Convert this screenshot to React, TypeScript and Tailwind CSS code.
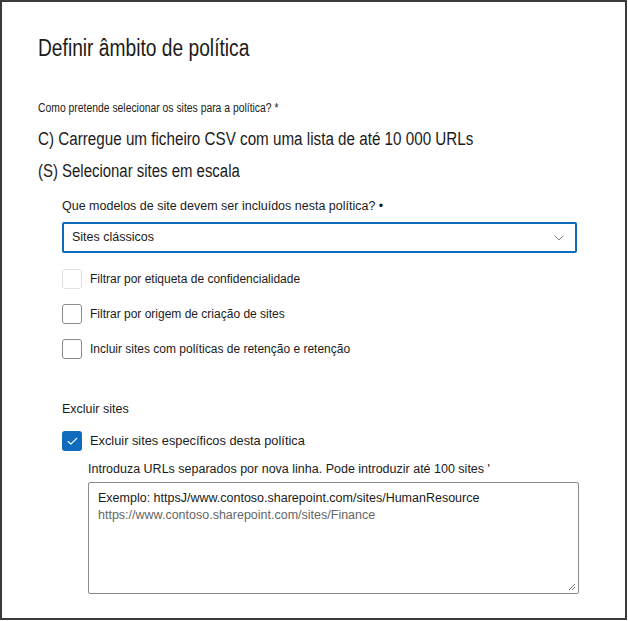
import { ChevronDown, Check } from 'lucide-react';

const filters = [
  { label: 'Filtrar por etiqueta de confidencialidade', faded: true },
  { label: 'Filtrar por origem de criação de sites', faded: false },
  { label: 'Incluir sites com políticas de retenção e retenção', faded: false },
];

export default function App() {
  return (
    <div className="w-[628px] h-[621px] bg-white" style={{ fontFamily: '"Liberation Sans", Arial, sans-serif' }}>
      <div className="w-[627px] h-[620px] border-2 border-[#3b3b3b] pl-[36px] pt-[32px] text-[#1b1b1b]">
        {/* top block uses a condensed face in the original, squeeze it */}
        <h1 className="text-[23px] leading-[28px] whitespace-nowrap origin-left scale-x-[0.835]">Definir âmbito de política</h1>

        <p className="mt-[38px] text-[12.5px] leading-[16px] whitespace-nowrap origin-left scale-x-[0.83]">Como pretende selecionar os sites para a política? *</p>
        <p className="mt-[12px] text-[18px] leading-[22px] whitespace-nowrap origin-left scale-x-[0.845]">C) Carregue um ficheiro CSV com uma lista de até 10 000 URLs</p>
        <p className="mt-[10px] text-[18px] leading-[22px] whitespace-nowrap origin-left scale-x-[0.83]">(S) Selecionar sites em escala</p>

        <div className="pl-[24px]">
          <p className="mt-[16px] text-[12.5px] leading-[16px]">Que modelos de site devem ser incluídos nesta política? •</p>
          <div className="mt-[8px] w-[515px] h-[31px] border-2 border-[#0f6cbd] rounded-[2px] flex items-center justify-between pl-[8px] pr-[8px]">
            <span className="text-[12.5px]">Sites clássicos</span>
            <ChevronDown className="w-[16px] h-[16px] text-[#666]" strokeWidth={1.25} />
          </div>

          <div className="mt-[16px] flex flex-col gap-[15px]">
            {filters.map(f => (
              <div key={f.label} className="flex items-center h-[20px]">
                <div className={`w-[20px] h-[20px] rounded-[3px] border ${f.faded ? 'border-[#e1e1e1]' : 'border-[#8a8a8a]'}`} />
                <span className="ml-[8px] text-[12px]">{f.label}</span>
              </div>
            ))}
          </div>

          <p className="mt-[42px] text-[12.5px] leading-[16px]">Excluir sites</p>
          <div className="mt-[14px] flex items-center h-[20px]">
            <div className="w-[20px] h-[20px] rounded-[3px] bg-[#0f6cbd] flex items-center justify-center">
              <Check className="w-[13px] h-[13px] text-white" strokeWidth={2} />
            </div>
            <span className="ml-[8px] text-[12.8px]">Excluir sites específicos desta política</span>
          </div>

          <div className="pl-[26px]">
            <p className="mt-[10px] text-[12.5px] leading-[16px]">Introduza URLs separados por nova linha. Pode introduzir até 100 sites '</p>
            <div className="relative mt-[5px] w-[491px] h-[112px] border border-[#8a8a8a] rounded-[2px] pl-[9px] pt-[7px] text-[12.5px] leading-[17px]">
              <div className="text-[#1b1b1b]">Exemplo: httpsJ/www.contoso.sharepoint.com/sites/HumanResource</div>
              <div className="text-[#666]">https://www.contoso.sharepoint.com/sites/Finance</div>
              <svg className="absolute right-[2px] bottom-[2px]" width="8" height="8" viewBox="0 0 8 8">
                <path d="M7 1L1 7M7 4L4 7" stroke="#777" strokeWidth="1" />
              </svg>
            </div>
          </div>
        </div>
      </div>
    </div>
  );
}
